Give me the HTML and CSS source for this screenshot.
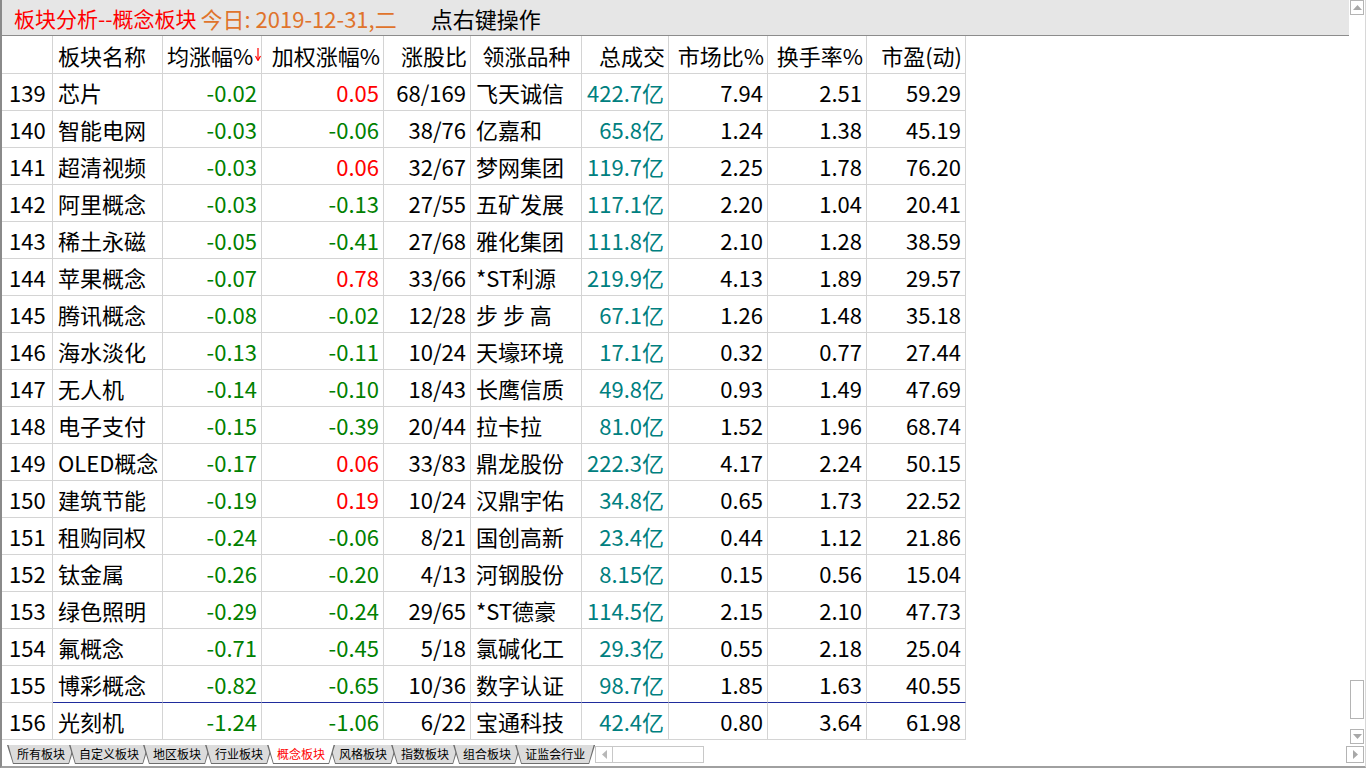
FILE: index.html
```html
<!DOCTYPE html>
<html lang="zh-CN">
<head>
    <meta charset="UTF-8">
    <title>板块分析--概念板块</title>
    <link rel="stylesheet" href="styles.css">
</head>
<body>
    <div class="app">
        <div class="top">
            <div class="content">
                <div class="titlebar">
                    <span class="t-red">板块分析--概念板块</span>
                    <span class="t-orange">今日: 2019-12-31,二</span>
                    <span class="t-black">点右键操作</span>
                </div>
                <table class="grid">
                    <colgroup>
                        <col style="width:51px"><col style="width:110px"><col style="width:99px">
                        <col style="width:122px"><col style="width:87px"><col style="width:111px">
                        <col style="width:87px"><col style="width:99px"><col style="width:99px">
                        <col style="width:99px">
                    </colgroup>
                    <thead>
                        <tr>
                            <th></th>
                            <th class="left">板块名称</th>
                            <th class="sorted">均涨幅%<svg class="sort-arrow" width="6" height="13" viewBox="0 0 6 13"><line x1="3" y1="0" x2="3" y2="11" stroke="#ff0000" stroke-width="1.2"/><path d="M0.5 8 L3 12.5 L5.5 8" fill="none" stroke="#ff0000" stroke-width="1.2"/></svg></th>
                            <th>加权涨幅%</th>
                            <th>涨股比</th>
                            <th class="center">领涨品种</th>
                            <th>总成交</th>
                            <th>市场比%</th>
                            <th>换手率%</th>
                            <th>市盈(动)</th>
                        </tr>
                    </thead>
                    <tbody id="rows"></tbody>
                </table>
            </div>
            <div class="vscroll">
                <div class="sbtn"><svg width="9" height="5" viewBox="0 0 9 5"><path d="M4.5 0 L9 5 L0 5 Z" fill="#a8a8a8"/></svg></div>
                <div class="thumb"></div>
                <div class="sbtn"><svg width="9" height="5" viewBox="0 0 9 5"><path d="M0 0 L9 0 L4.5 5 Z" fill="#a8a8a8"/></svg></div>
            </div>
        </div>
        <div class="bottom">
            <div class="tabs">
                <div class="tab"><span>所有板块</span></div>
                <div class="tab"><span>自定义板块</span></div>
                <div class="tab"><span>地区板块</span></div>
                <div class="tab"><span>行业板块</span></div>
                <div class="tab active"><span>概念板块</span></div>
                <div class="tab"><span>风格板块</span></div>
                <div class="tab"><span>指数板块</span></div>
                <div class="tab"><span>组合板块</span></div>
                <div class="tab"><span>证监会行业</span></div>
            </div>
            <div class="hscroll">
                <div class="hbtn"><svg width="5" height="9" viewBox="0 0 5 9"><path d="M5 0 L5 9 L0 4.5 Z" fill="#b8b8b8"/></svg></div>
            </div>
            <div class="hbtn right"><svg width="5" height="9" viewBox="0 0 5 9"><path d="M0 0 L5 4.5 L0 9 Z" fill="#a8a8a8"/></svg></div>
        </div>
    </div>
    <script>
        // id, name, avg, weighted, up ratio, leader, volume, market %, turnover, pe
        const data = [
            [139, '芯片', '-0.02', '0.05', '68/169', '飞天诚信', '422.7亿', '7.94', '2.51', '59.29'],
            [140, '智能电网', '-0.03', '-0.06', '38/76', '亿嘉和', '65.8亿', '1.24', '1.38', '45.19'],
            [141, '超清视频', '-0.03', '0.06', '32/67', '梦网集团', '119.7亿', '2.25', '1.78', '76.20'],
            [142, '阿里概念', '-0.03', '-0.13', '27/55', '五矿发展', '117.1亿', '2.20', '1.04', '20.41'],
            [143, '稀土永磁', '-0.05', '-0.41', '27/68', '雅化集团', '111.8亿', '2.10', '1.28', '38.59'],
            [144, '苹果概念', '-0.07', '0.78', '33/66', '*ST利源', '219.9亿', '4.13', '1.89', '29.57'],
            [145, '腾讯概念', '-0.08', '-0.02', '12/28', '步 步 高', '67.1亿', '1.26', '1.48', '35.18'],
            [146, '海水淡化', '-0.13', '-0.11', '10/24', '天壕环境', '17.1亿', '0.32', '0.77', '27.44'],
            [147, '无人机', '-0.14', '-0.10', '18/43', '长鹰信质', '49.8亿', '0.93', '1.49', '47.69'],
            [148, '电子支付', '-0.15', '-0.39', '20/44', '拉卡拉', '81.0亿', '1.52', '1.96', '68.74'],
            [149, 'OLED概念', '-0.17', '0.06', '33/83', '鼎龙股份', '222.3亿', '4.17', '2.24', '50.15'],
            [150, '建筑节能', '-0.19', '0.19', '10/24', '汉鼎宇佑', '34.8亿', '0.65', '1.73', '22.52'],
            [151, '租购同权', '-0.24', '-0.06', '8/21', '国创高新', '23.4亿', '0.44', '1.12', '21.86'],
            [152, '钛金属', '-0.26', '-0.20', '4/13', '河钢股份', '8.15亿', '0.15', '0.56', '15.04'],
            [153, '绿色照明', '-0.29', '-0.24', '29/65', '*ST德豪', '114.5亿', '2.15', '2.10', '47.73'],
            [154, '氟概念', '-0.71', '-0.45', '5/18', '氯碱化工', '29.3亿', '0.55', '2.18', '25.04'],
            [155, '博彩概念', '-0.82', '-0.65', '10/36', '数字认证', '98.7亿', '1.85', '1.63', '40.55'],
            [156, '光刻机', '-1.24', '-1.06', '6/22', '宝通科技', '42.4亿', '0.80', '3.64', '61.98']
        ];

        function colorOf(v) {
            return v.charAt(0) === '-' ? 'down' : 'up';
        }

        const tbody = document.getElementById('rows');
        data.forEach((r, i) => {
            const row = document.createElement('tr');
            if (i === data.length - 2) row.className = 'mark';
            row.innerHTML = `
                <td class="num">${r[0]}</td>
                <td class="left">${r[1]}</td>
                <td class="${colorOf(r[2])}">${r[2]}</td>
                <td class="${colorOf(r[3])}">${r[3]}</td>
                <td>${r[4]}</td>
                <td class="left lead">${r[5]}</td>
                <td class="vol">${r[6]}</td>
                <td>${r[7]}</td>
                <td>${r[8]}</td>
                <td>${r[9]}</td>
            `;
            tbody.appendChild(row);
        });
    </script>
</body>
</html>
```

FILE: styles.css
```css
body {
    margin: 0;
    background-color: #ffffff;
    font-family: "Noto Sans CJK SC", "Noto Sans", sans-serif;
    color: #000000;
    overflow: hidden;
}
.app {
    width: 1366px;
    height: 768px;
    box-sizing: border-box;
    border-left: 2px solid #8a8a8a;
    border-right: 1px solid #d8d8d8;
    border-bottom: 2px solid #a0a0a0;
    display: flex;
    flex-direction: column;
}
.top {
    height: 744px;
    display: flex;
}
.content {
    flex: 1;
    overflow: hidden;
}
.titlebar {
    height: 35px;
    background-color: #e6e6e6;
    border-bottom: 1px solid #8c8c8c;
    display: flex;
    align-items: center;
    padding-left: 12px;
    font-size: 21px;
    white-space: nowrap;
}
.t-red {
    color: #ff0000;
}
.t-orange {
    color: #e0742c;
    margin-left: 4px;
    font-size: 22px;
}
.t-black {
    margin-left: 34px;
    font-size: 22px;
}

/* data grid */
.grid {
    border-collapse: separate;
    border-spacing: 0;
    table-layout: fixed;
    width: 964px;
    font-size: 22px;
}
.grid th, .grid td {
    box-sizing: border-box;
    border-right: 1px solid #d4d4d4;
    border-bottom: 1px solid #d4d4d4;
    padding: 0 4px 0 4px;
    text-align: right;
    white-space: nowrap;
    overflow: hidden;
    line-height: 30px;
}
.grid th {
    height: 38px;
    font-weight: normal;
    padding-right: 3px;
}
.grid td {
    height: 37px;
}
.grid .left {
    text-align: left;
    padding-left: 5px;
}
.grid .center {
    text-align: center;
}
.grid th.sorted {
    padding-right: 2px;
}
.sort-arrow {
    margin-left: 2px;
    vertical-align: 4px;
}
.grid td.num {
    text-align: left;
    padding-left: 7px;
}
.grid td.lead {
    padding-left: 5px;
}
.grid tr.mark td {
    border-bottom-color: #1f2c9c;
}
.grid tr.mark td.num {
    border-bottom-color: #d4d4d4;
}
.up {
    color: #ff0000;
}
.down {
    color: #008000;
}
.vol {
    color: #008080;
}

/* vertical scrollbar */
.vscroll {
    width: 16px;
    display: flex;
    flex-direction: column;
}
.sbtn {
    width: 14px;
    height: 15px;
    margin-left: 1px;
    box-sizing: border-box;
    border: 1px solid #b4b4b4;
    display: flex;
    align-items: center;
    justify-content: center;
}
.thumb {
    width: 14px;
    height: 39px;
    margin: auto 0 10px 1px;
    box-sizing: border-box;
    border: 1px solid #b4b4b4;
}

/* sheet tabs */
.bottom {
    height: 22px;
    display: flex;
    align-items: flex-start;
    padding-top: 1px;
    box-sizing: border-box;
}
.tabs {
    display: flex;
    padding-left: 11px;
}
.tab {
    margin-left: -6px;
    height: 19px;
    background-color: #6e6e6e;
    clip-path: polygon(0 0, 100% 0, calc(100% - 6px) 100%, 6px 100%);
    box-sizing: border-box;
    padding-bottom: 1px;
}
.tab span {
    display: block;
    height: 18px;
    padding: 0 10px;
    background-color: #dcdcdc;
    clip-path: polygon(1.5px 0, calc(100% - 1.5px) 0, calc(100% - 6.5px) 100%, 6.5px 100%);
    font-size: 12px;
    line-height: 18px;
    color: #000000;
}
.tab.active {
    position: relative;
    z-index: 1;
}
.tab.active span {
    background-color: #ffffff;
    color: #ff0000;
}
.hscroll {
    width: 109px;
    height: 17px;
    margin-top: 1px;
    box-sizing: border-box;
    border: 1px solid #c8c8c8;
    display: flex;
}
.hbtn {
    width: 17px;
    height: 15px;
    box-sizing: border-box;
    border-right: 1px solid #c8c8c8;
    display: flex;
    align-items: center;
    justify-content: center;
}
.hbtn.right {
    width: 18px;
    height: 17px;
    margin-top: 1px;
    margin-left: auto;
    margin-right: 1px;
    border: 1px solid #b4b4b4;
}
```
